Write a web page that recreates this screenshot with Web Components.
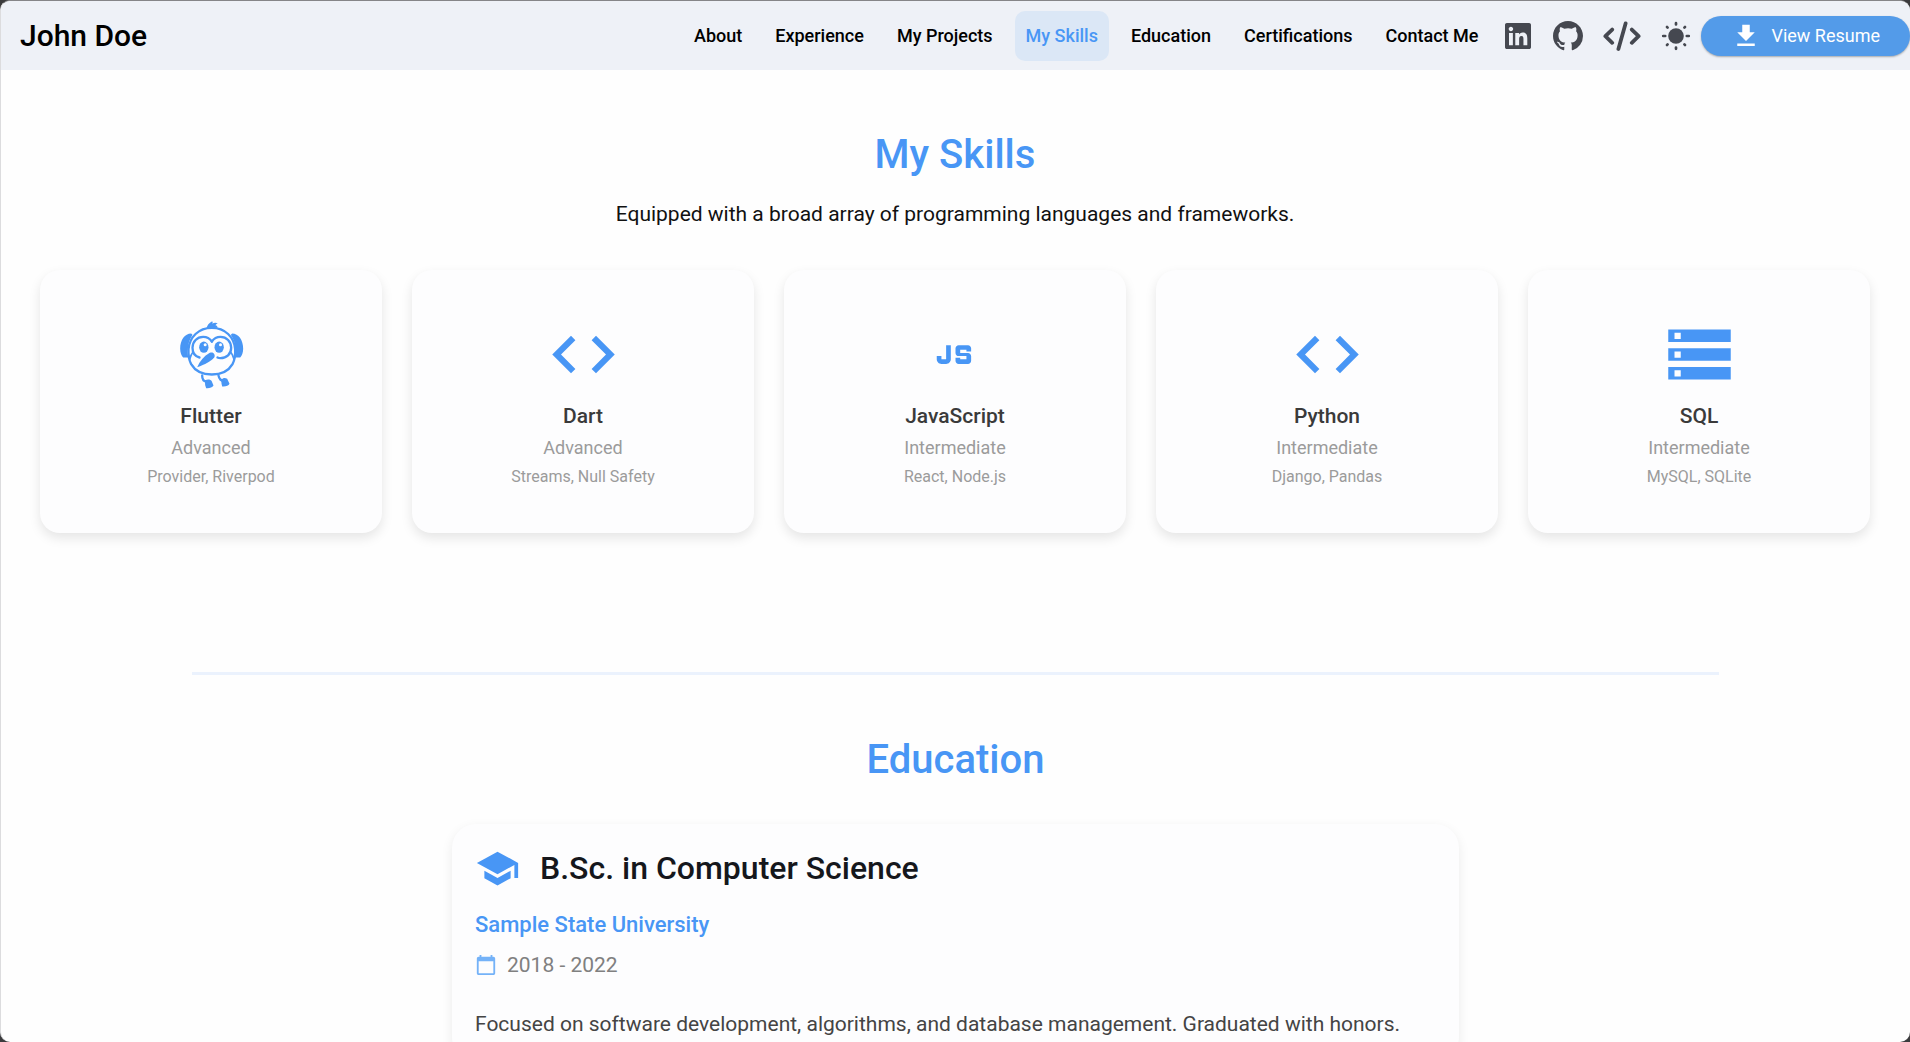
<!DOCTYPE html>
<html lang="en">
<head>
<meta charset="utf-8">
<meta name="viewport" content="width=device-width, initial-scale=1">
<title>John Doe - Portfolio</title>
<style>
  html, body { margin: 0; height: 100%; }
  body { background: #3b3b3d; font-family: Roboto, "Liberation Sans", sans-serif; color: #000; --accent: #4896f5; overflow: hidden; }
</style>
</head>
<body>
<portfolio-app></portfolio-app>

<script>
const ICONS = {
  linkedin: ['0 32 448 448', '<path d="M416 32H31.9C14.3 32 0 46.5 0 64.3v383.4C0 465.5 14.3 480 31.9 480H416c17.6 0 32-14.5 32-32.3V64.3c0-17.8-14.4-32.3-32-32.3zM135.4 416H69V202.2h66.5V416zm-33.2-243c-21.3 0-38.5-17.3-38.5-38.5S80.9 96 102.2 96c21.2 0 38.5 17.3 38.5 38.5 0 21.3-17.2 38.5-38.5 38.5zm282.1 243h-66.4V312c0-24.8-.5-56.7-34.5-56.7-34.6 0-39.9 27-39.9 54.9V416h-66.4V202.2h63.7v29.2h.9c8.9-16.8 30.6-34.5 62.9-34.5 67.2 0 79.7 44.3 79.7 101.9V416z"/>'],
  github: ['0 0 16 16', '<path d="M8 0C3.58 0 0 3.58 0 8c0 3.54 2.29 6.53 5.47 7.59.4.07.55-.17.55-.38 0-.19-.01-.82-.01-1.49-2.01.37-2.53-.49-2.69-.94-.09-.23-.48-.94-.82-1.13-.28-.15-.68-.52-.01-.53.63-.01 1.08.58 1.23.82.72 1.21 1.87.87 2.33.66.07-.52.28-.87.51-1.07-1.78-.2-3.64-.89-3.64-3.95 0-.87.31-1.59.82-2.15-.08-.2-.36-1.02.08-2.12 0 0 .67-.21 2.2.82.64-.18 1.32-.27 2-.27s1.36.09 2 .27c1.53-1.04 2.2-.82 2.2-.82.44 1.1.16 1.92.08 2.12.51.56.82 1.27.82 2.15 0 3.07-1.87 3.75-3.65 3.95.29.25.54.73.54 1.48 0 1.07-.01 1.93-.01 2.2 0 .21.15.46.55.38A8.01 8.01 0 0 0 16 8c0-4.42-3.58-8-8-8z"/>'],
  slashcode: ['0 0 38 30', '<g fill="none" stroke="currentColor" stroke-width="3.8" stroke-linecap="round" stroke-linejoin="round"><path d="M9.2 8.6 2.4 15.2l6.8 6.6M28.8 8.6l6.8 6.6-6.8 6.6M22.6 2.4 15.4 28"/></g>'],
  sun: ['0 0 30 30', '<circle cx="15" cy="15" r="7.8"/><g fill="none" stroke="currentColor" stroke-width="2.7" stroke-linecap="round"><path d="M15 2.2v1.2M15 26.6v1.2M2.2 15h2M25.8 15h2M6 6l.6.6M23.4 23.4l.6.6M24 6l-.6.6M6.6 23.4l-.6.6"/></g>'],
  download: ['0 0 24 24', '<path d="M19 9h-4V3H9v6H5l7 7 7-7zM5 18v2h14v-2H5z"/>'],
  code: ['0 0 24 24', '<path d="M9.4 16.6 4.8 12l4.6-4.6L8 6l-6 6 6 6 1.4-1.4zm5.2 0 4.6-4.6-4.6-4.6L16 6l6 6-6 6-1.4-1.4z"/>'],
  script: ['0 0 24 24', '<path d="M12 14v-1h1.5v.5h2v-1H13c-.55 0-1-.45-1-1V10c0-.55.45-1 1-1h3c.55 0 1 .45 1 1v1h-1.5v-.5h-2v1H16c.55 0 1 .45 1 1V14c0 .55-.45 1-1 1h-3c-.55 0-1-.45-1-1zM9 9v4.5H7.5v-1H6v1c0 .83.67 1.5 1.5 1.5H9c.83 0 1.5-.67 1.5-1.5V9H9z"/>'],
  storage: ['0 0 24 24', '<path d="M2 20h20v-4H2v4zm2-3h2v2H4v-2zM2 4v4h20V4H2zm4 3H4V5h2v2zm-4 7h20v-4H2v4zm2-3h2v2H4v-2z"/>'],
  school: ['0 0 24 24', '<path d="M5 13.18v4L12 21l7-3.82v-4L12 17l-7-3.82zM12 3 1 9l11 6 9-4.91V17h2V9L12 3z"/>'],
  calendar: ['0 0 24 24', '<path d="M20 3h-1V1h-2v2H7V1H5v2H4c-1.1 0-2 .9-2 2v16c0 1.1.9 2 2 2h16c1.1 0 2-.9 2-2V5c0-1.1-.9-2-2-2zm0 18H4V8h16v13z"/>'],
  dash: ['70.5 52.5 225 225', `
    <path d="M122 102C103 102 89 121 89 148c0 12 4 22 9 26h16c-3-8-3-16-2-24 1-18 5-30 14-44z"/>
    <path d="M245 102c19 0 33 19 33 46 0 12-4 22-9 26h-16c3-8 3-16 2-24-1-18-5-30-14-44z"/>
    <path d="M168 86c2-9 7-16 17-21 2 3 2 6 0 8 5-4 12-5 17-1-4 1-6 3-7 5 4 0 6 3 6 8z"/>
    <g fill="none" stroke="currentColor" stroke-width="7" stroke-linecap="round">
      <path d="M184 85c-40 0-67 28-70 64-1 20 1 32 8 45 12 21 35 31 62 31s50-10 62-31c7-13 9-25 8-45-3-36-30-64-70-64z"/>
      <path d="M184 126c-6-9-16-14-26-14-18 0-32 14-32 33 0 15 8 26 21 29"/>
      <path d="M184 126c6-9 16-14 26-14 18 0 32 14 32 33s-14 31-32 31c-4 0-7-1-9-2"/>
      <path d="M127 158c-4 5-7 12-9 20M241 158c4 5 7 12 9 20" stroke-width="5"/>
      <path d="M155 228c0 10 4 17 12 18M204 228c2 10 7 16 16 16"/>
    </g>
    <ellipse cx="160" cy="143" rx="14" ry="17"/><circle cx="164" cy="136" r="4.5" fill="#fdfdfe"/>
    <ellipse cx="206" cy="143" rx="14" ry="17"/><circle cx="210" cy="136" r="4.5" fill="#fdfdfe"/>
    <path d="M140 203c8-18 20-33 38-43 10-5 18 5 13 14-10 12-27 21-51 29z"/>
    <path d="M163 243c8-5 15-4 20 1l6 14c-4 6-12 9-22 8l-3-9zM212 240c7-6 12-6 18-2l7 15c-3 6-11 9-22 8l-2-9z"/>`]
};

class BaseElement extends HTMLElement {
  constructor() { super(); this.attachShadow({ mode: 'open' }); }
  connectedCallback() { this.shadowRoot.innerHTML = this.render(); }
}

/* Icon: <app-icon name="..."> takes its size from its box and its colour from the text colour. */
customElements.define('app-icon', class extends BaseElement {
  render() {
    const [box, body] = ICONS[this.getAttribute('name')];
    return `<style>:host{display:block;flex:none} svg{display:block;width:100%;height:100%;fill:currentColor}</style>
      <svg viewBox="${box}" aria-hidden="true">${body}</svg>`;
  }
});

customElements.define('nav-link', class extends BaseElement {
  render() {
    return `<style>
      :host{display:block}
      a{display:block;padding:0 11px;border-radius:10px;font-size:18px;line-height:50px;font-weight:500;color:#000;text-decoration:none;white-space:nowrap}
      :host([active]) a{background:#dbe7f6;color:var(--accent)}
    </style><a href="${this.getAttribute('href')}"><slot></slot></a>`;
  }
});

customElements.define('icon-link', class extends BaseElement {
  render() {
    return `<style>
      :host{display:block}
      a,button{display:flex;align-items:center;height:50px;padding:0 10px;color:#454850;background:none;border:0}
      app-icon{width:30px;height:30px}
      :host([size=small]) app-icon{width:26px;height:26px;margin:0 2px}
      :host([size=wide]) app-icon{width:38px}
    </style>` + (this.hasAttribute('href')
      ? `<a href="${this.getAttribute('href')}" aria-label="${this.getAttribute('label')}"><app-icon name="${this.getAttribute('icon')}"></app-icon></a>`
      : `<button type="button" aria-label="${this.getAttribute('label')}"><app-icon name="${this.getAttribute('icon')}"></app-icon></button>`);
  }
});

customElements.define('resume-button', class extends BaseElement {
  render() {
    return `<style>
      :host{display:block;flex:none}
      button{display:flex;align-items:center;gap:10px;height:40px;padding:0 30px;border:0;border-radius:20px;background:#539be9;color:#fff;
        font-family:inherit;font-size:18px;font-weight:400;white-space:nowrap;box-shadow:0 1px 2px rgba(0,0,0,.3)}
      app-icon{width:30px;height:30px}
    </style><button type="button"><app-icon name="download"></app-icon><slot></slot></button>`;
  }
});

customElements.define('site-header', class extends BaseElement {
  render() {
    return `<style>
      :host{display:block;background:#eef1f7}
      header{display:flex;align-items:center;height:69px;padding-left:19px}
      .brand{margin-right:auto;font-size:30px;line-height:36px;font-weight:500;white-space:nowrap}
      nav{display:flex;gap:11px;margin-right:4px}
      .tools{display:flex}
    </style>
    <header>
      <span class="brand">John Doe</span>
      <nav aria-label="Sections">
        <nav-link href="#about">About</nav-link>
        <nav-link href="#experience">Experience</nav-link>
        <nav-link href="#projects">My Projects</nav-link>
        <nav-link href="#skills" active>My Skills</nav-link>
        <nav-link href="#education">Education</nav-link>
        <nav-link href="#certifications">Certifications</nav-link>
        <nav-link href="#contact">Contact Me</nav-link>
      </nav>
      <div class="tools">
        <icon-link href="#linkedin" label="LinkedIn" icon="linkedin" size="small"></icon-link>
        <icon-link href="#github" label="GitHub" icon="github"></icon-link>
        <icon-link href="#source" label="Source code" icon="slashcode" size="wide"></icon-link>
        <icon-link label="Switch theme" icon="sun"></icon-link>
      </div>
      <resume-button>View Resume</resume-button>
    </header>`;
  }
});

customElements.define('section-title', class extends BaseElement {
  render() {
    return `<style>
      :host{display:block;text-align:center}
      h2{margin:0;font-size:40px;line-height:50px;font-weight:500;color:var(--accent)}
      ::slotted(p){margin:20px 0 0;font-size:21px;line-height:28px;color:#111}
    </style><h2>${this.getAttribute('heading')}</h2><slot></slot>`;
  }
});

customElements.define('skill-card', class extends BaseElement {
  render() {
    return `<style>
      :host{display:block;flex:1 1 0;min-width:0}
      article{display:flex;flex-direction:column;align-items:center;padding:47px 20px 45px;border-radius:20px;background:#fdfdfe;
        box-shadow:0 5px 12px rgba(0,0,0,.1);text-align:center}
      app-icon{width:75px;height:75px;color:var(--accent)}
      h3{margin:10px 0 0;font-size:21px;line-height:28px;font-weight:500;color:#3a3a3a}
      p{margin:4px 0 0;font-size:18px;line-height:28px;color:#9b9b9b}
      small{margin-top:4px;font-size:16px;line-height:22px;color:#9b9b9b}
    </style>
    <article>
      <app-icon name="${this.getAttribute('icon')}"></app-icon>
      <h3>${this.getAttribute('name')}</h3>
      <p>${this.getAttribute('level')}</p>
      <small><slot></slot></small>
    </article>`;
  }
});

customElements.define('education-card', class extends BaseElement {
  render() {
    return `<style>
      :host{display:block}
      article{padding:21px 23px 23px;border-radius:24px;background:#fdfdfe;box-shadow:0 4px 12px rgba(0,0,0,.08)}
      .row{display:flex;align-items:center}
      .degree{gap:20px}
      .degree app-icon{width:45px;height:45px;color:var(--accent)}
      h3{margin:0;font-size:32px;line-height:46px;font-weight:500;color:#15171c}
      h4{margin:20px 0 0;font-size:22px;line-height:28px;font-weight:500;color:var(--accent)}
      .date{gap:10px;margin-top:12px;font-size:21px;line-height:28px;color:#808080}
      .date app-icon{width:22px;height:22px;color:#74b2f8}
      .about{margin:31px 0 0;font-size:21px;line-height:28px;color:#444}
    </style>
    <article>
      <div class="row degree"><app-icon name="school"></app-icon><h3>${this.getAttribute('degree')}</h3></div>
      <h4>${this.getAttribute('school')}</h4>
      <div class="row date"><app-icon name="calendar"></app-icon><span>${this.getAttribute('years')}</span></div>
      <p class="about"><slot></slot></p>
    </article>`;
  }
});

customElements.define('portfolio-app', class extends BaseElement {
  render() {
    return `<style>
      :host{display:flex;flex-direction:column;box-sizing:border-box;height:100vh;border-top:1px solid #858588;border-left:1px solid #dcdcde;
        border-radius:10px;overflow:hidden;background:#fefefe}
      main{flex:1;min-height:0;overflow-y:auto;scrollbar-width:none}
      #skills{padding:60px 40px 0 39px}
      .cards{display:flex;gap:30px;margin-top:42px}
      hr{width:80%;height:3px;margin:139px auto 60px;border:0;background:#ebf2fd}
      .list{width:1007px;max-width:calc(100% - 80px);margin:39px auto}
    </style>
    <site-header></site-header>
    <main>
      <section id="skills">
        <section-title heading="My Skills"><p>Equipped with a broad array of programming languages and frameworks.</p></section-title>
        <div class="cards">
          <skill-card icon="dash" name="Flutter" level="Advanced">Provider, Riverpod</skill-card>
          <skill-card icon="code" name="Dart" level="Advanced">Streams, Null Safety</skill-card>
          <skill-card icon="script" name="JavaScript" level="Intermediate">React, Node.js</skill-card>
          <skill-card icon="code" name="Python" level="Intermediate">Django, Pandas</skill-card>
          <skill-card icon="storage" name="SQL" level="Intermediate">MySQL, SQLite</skill-card>
        </div>
      </section>
      <hr>
      <section id="education">
        <section-title heading="Education"></section-title>
        <div class="list">
          <education-card degree="B.Sc. in Computer Science" school="Sample State University" years="2018 - 2022">Focused on software development, algorithms, and database management. Graduated with honors.</education-card>
        </div>
      </section>
    </main>`;
  }
});
</script>
</body>
</html>
